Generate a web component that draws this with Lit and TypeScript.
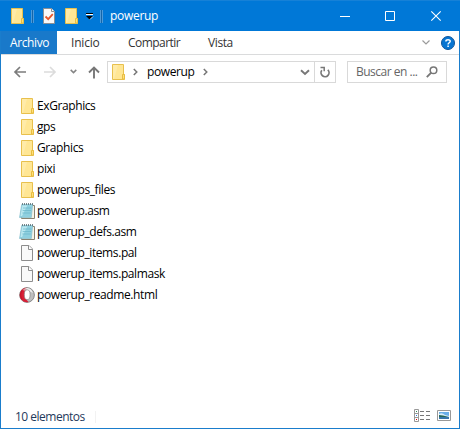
import { LitElement, html, css, svg } from "lit";
import { customElement, property } from "lit/decorators.js";

const folder = svg`
  <path d="M1.5 .5h11v10.2h1v4.8h-12z" fill="#ffe694" stroke="#e8c04d"/>
  <path d="M2 1h5L3 15H2z" fill="#ffeba8"/>
  <path d="M11.5 15v-4.5h2V15z" fill="#ffe07a" stroke="#e8bd42"/>`;

const icons: Record<string, [number, number, unknown]> = {
  folder: [14, 16, folder],
  check: [12, 16, svg`<path d="M.5 .5h8l3 3v12H.5z" fill="#f8f8f8" stroke="#8b8f94"/>
    <path d="M8.5 .5v3h3" fill="#fff" stroke="#8b8f94"/>
    <path d="M2.5 8.5l2.7 2.7 4.6-5" fill="none" stroke="#e8562a" stroke-width="1.8"/>`],
  menu: [7, 6, svg`<path d="M0 .5h7" stroke="#000"/><path d="M0 1.500h7" stroke="#fff"/><path d="M0 3h7L3.500 6.500z" fill="#000"/><path d="M4 6.500L7 3.500" stroke="#fff" stroke-width=".7"/>`],
  minimize: [10, 10, svg`<path d="M0 5.500h10" stroke="#fff"/>`],
  maximize: [10, 10, svg`<path d="M.5 .5h9v9h-9z" fill="none" stroke="#fff"/>`],
  close: [10, 10, svg`<path d="M.3 .3l9.400 9.400M9.700 .3L.3 9.700" stroke="#fff" stroke-width="1.1"/>`],
  expand: [8, 5, svg`<path d="M.5 .5L4 4 7.500 .5" fill="none" stroke="#9b9b9b" stroke-width="1.2"/>`],
  help: [14, 14, svg`<circle cx="7" cy="7" r="6.500" fill="#0876d2" stroke="#0f559b"/>
    <path d="M4.900 5.400C4.900 3.200 9.200 3.200 9.200 5.300 9.200 6.800 7.100 6.700 7.100 8.500M7.100 9.600v1.500" fill="none" stroke="#fff" stroke-width="1.500"/>`],
  back: [12, 12, svg`<path d="M12 6H1.500M6 1L1 6l5 5" fill="none" stroke="#7c7c7c" stroke-width="1.700"/>`],
  forward: [12, 12, svg`<path d="M0 6h10.500M6 1l5 5-5 5" fill="none" stroke="#dcdcdc" stroke-width="1.700"/>`],
  recent: [7, 5, svg`<path d="M.7 .9L3.500 3.600 6.300 .9" fill="none" stroke="#858585" stroke-width="1.500"/>`],
  up: [12, 13, svg`<path d="M6 12.500V1.500M1 6.500l5-5 5 5" fill="none" stroke="#777" stroke-width="1.900"/>`],
  crumb: [5, 8, svg`<path d="M.8 .9L3.800 4 .8 7.100" fill="none" stroke="#757575" stroke-width="1.500"/>`],
  drop: [10, 7, svg`<path d="M1 1.200L5 5 9 1.200" fill="none" stroke="#777" stroke-width="1.900"/>`],
  refresh: [10, 12, svg`<path d="M7.800 3.800A4 4 0 1 1 1.800 4.300" fill="none" stroke="#777" stroke-width="1.700"/><path d="M.5 1.500H4.200V5.200" fill="none" stroke="#777" stroke-width="1.500"/>`],
  search: [12, 12, svg`<circle cx="7.500" cy="4.300" r="3.300" fill="none" stroke="#777" stroke-width="1.500"/><path d="M5.200 6.700L.8 11.100" stroke="#777" stroke-width="1.900"/>`],
  asm: [16, 16, svg`<path d="M4 2.500h11.500v13H2.500z" fill="#f6f3e6" stroke="#8a8370"/>
    <path d="M2.700 1.500H13.700L12.300 14.500H.5z" fill="#8fd0df" stroke="#7fb9c8" stroke-width=".6"/>
    <path d="M3.300 2.500h5L3 13H1.500z" fill="#bce8f0"/>
    <path d="M4 5h8.500M3.700 7.500H12M3.300 10h8.400" stroke="#69b4c8" stroke-width=".7"/>
    <path d="M3 1h12" stroke="#4d6469" stroke-width="1.400" stroke-dasharray="1 1"/>`],
  file: [12, 16, svg`<path d="M.5 .5h7.500l3.500 3.500v11.500H.5z" fill="#f9f9f9" stroke="#8d8d8d"/><path d="M7.500 .5V4.500h4" fill="#fff" stroke="#8d8d8d"/>`],
  opera: [16, 16, svg`<circle cx="8" cy="8" r="7.400" fill="#bebebe" stroke="#777" stroke-width=".8"/>
    <path d="M8 .8A7.200 7.200 0 0 0 2.500 12.700Q5.500 16 9.500 15L6 11V5z" fill="#d81f36"/>
    <path d="M3.500 3Q5.500 .8 9 1L6.500 4z" fill="#d8a0a5"/>
    <path d="M3 3.500Q.3 8 3 12.500" fill="none" stroke="#c0152c" stroke-width="1.200"/>
    <path d="M6 1.500Q9 0 12 2.500L14 6 10 4z" fill="#efefef"/>
    <ellipse cx="8.200" cy="7.700" rx="2.900" ry="4.900" fill="#fff" stroke="#858585" stroke-width=".7"/>`],
  details: [16, 13, svg`<path d="M.5 .5h4v12h-4zM.5 4.500h4M.5 8.500h4" fill="#fff" stroke="#999"/>
    <path d="M2 2.500h1" stroke="#2b8a57"/><path d="M2 6.500h1" stroke="#2378dc"/><path d="M2 10.500h1" stroke="#d00"/>
    <path d="M6 2.500h4m2 0h4M6 6.500h4m2 0h4M6 10.500h4m2 0h4" stroke="#777"/>`],
  preview: [14, 11, svg`<path d="M.5 .5h13v10H.5z" fill="#fff" stroke="#999"/><path d="M2 2h10v7H2z" fill="#69aee8"/><path d="M2 4q3-2 6 1l4 1v1H2z" fill="#d8edf7"/><path d="M2 5l4 .5 6 1.500H2z" fill="#276755"/><path d="M2 7h10v2H2z" fill="#3876aa"/>`],
};

@customElement("ui-icon")
class UiIcon extends LitElement {
  @property() name = "folder";
  static styles = css`:host{display:block;flex:none}svg{display:block;overflow:visible}`;
  render() {
    const [w, h, art] = icons[this.name];
    return html`<svg width=${w} height=${h} viewBox="0 0 ${w} ${h}">${art}</svg>`;
  }
}

const files = [
  ["folder", "ExGraphics"], ["folder", "gps"], ["folder", "Graphics"], ["folder", "pixi"],
  ["folder", "powerups_files"], ["asm", "powerup.asm"], ["asm", "powerup_defs.asm"],
  ["file", "powerup_items.pal"], ["file", "powerup_items.palmask"], ["opera", "powerup_readme.html"],
];

@customElement("app-root")
class AppRoot extends LitElement {
  static styles = css`
    :host{display:block;height:429px;font:12px/16px "Open Sans","Noto Sans",sans-serif;letter-spacing:-.4px;color:#000}
    *{box-sizing:border-box}
    .window{width:460px;height:429px;display:flex;flex-direction:column;background:#fff;border:1px solid #1a7dcc;border-top:0}
    .title{height:31px;margin:0 -1px;flex:none;display:flex;align-items:center;background:#0078d7;border-top:1px solid #1681d7;color:#fff;padding-left:10px;letter-spacing:-.3px}
    .sep{width:3px;height:13px;border:1px solid #4c9ada;border-width:0 1px;background:#1565a8;flex:none}
    .title .s1{margin:0 9px 0 7px}.title .f2{margin:0 8px 0 9px}.title .s2{margin:0 7px 0 7px}
    .controls{margin-left:auto;display:flex;gap:36px;padding-right:19px}
    .controls ui-icon:first-child{margin-right:-1px}
    .tabs{height:24px;flex:none;display:flex;border-bottom:1px solid #dadbdc;color:#333;line-height:23px}
    .tab{white-space:nowrap}
    .archive{width:56px;padding-left:9px;background:#1979ca;color:#fff}
    .home{padding-left:14px;width:71px;letter-spacing:-.2px}.share{width:80px;letter-spacing:-.55px}
    .tools{margin-left:auto;display:flex;align-items:center;gap:11px;padding-right:4px}
    .nav{height:34px;flex:none;display:flex;align-items:center;padding-left:13px}
    .nav .fw{margin-left:18px}.nav .rc{margin-left:14px;margin-bottom:2px}.nav .upi{margin:0 7px 0 11px}
    .address{width:229px;height:22px;border:1px solid #d9d9d9;display:flex;align-items:center;padding-left:3px}
    .address .c1{margin:0 9px 0 8px}.address .c2{margin-left:8px}.address .dr{margin:0 4px 0 auto}
    .crumb{width:48px;white-space:nowrap}
    .reload{width:21px;height:20px;border-left:1px solid #d9d9d9;display:grid;place-items:center}
    .search{width:100px;height:22px;border:1px solid #d9d9d9;margin-left:11px;padding:0 8px;display:flex;align-items:center;justify-content:space-between;color:#666;white-space:nowrap}
    .list{flex:1;padding:6px 0 0 18px}
    .search span{letter-spacing:-.5px}
    .row{height:21px;display:flex;align-items:center}
    .pic{width:16px;display:grid;place-items:center;margin-right:2px}
    .status{height:23px;flex:none;display:flex;align-items:center;padding:0 8px 0 14px;color:#1e395b}
    .count{width:81px;border-right:1px solid #f2f2f2;white-space:nowrap;height:12px;line-height:11px;letter-spacing:-.5px}
    .views{margin-left:auto;display:flex;align-items:center;gap:7px}
    .views ui-icon:first-child{margin-top:-2px}.views ui-icon:last-child{margin-top:-2px}
  `;
  render() {
    return html`<div class="window">
      <div class="title">
        <ui-icon></ui-icon><i class="sep s1"></i><ui-icon name="check"></ui-icon><ui-icon class="f2"></ui-icon>
        <ui-icon name="menu"></ui-icon><i class="sep s2"></i><span>powerup</span>
        <div class="controls"><ui-icon name="minimize"></ui-icon><ui-icon name="maximize"></ui-icon><ui-icon name="close"></ui-icon></div>
      </div>
      <div class="tabs">
        <span class="tab archive">Archivo</span><span class="tab home">Inicio</span><span class="tab share">Compartir</span><span class="tab">Vista</span>
        <div class="tools"><ui-icon name="expand"></ui-icon><ui-icon name="help"></ui-icon></div>
      </div>
      <div class="nav">
        <ui-icon name="back"></ui-icon><ui-icon class="fw" name="forward"></ui-icon><ui-icon class="rc" name="recent"></ui-icon><ui-icon class="upi" name="up"></ui-icon>
        <div class="address"><ui-icon></ui-icon><ui-icon class="c1" name="crumb"></ui-icon><span class="crumb">powerup</span><ui-icon class="c2" name="crumb"></ui-icon><ui-icon class="dr" name="drop"></ui-icon><div class="reload"><ui-icon name="refresh"></ui-icon></div></div>
        <div class="search"><span>Buscar en ...</span><ui-icon name="search"></ui-icon></div>
      </div>
      <div class="list">${files.map(([icon, name]) => html`<div class="row"><div class="pic"><ui-icon name=${icon}></ui-icon></div><span>${name}</span></div>`)}</div>
      <div class="status"><span class="count">10 elementos</span><div class="views"><ui-icon name="details"></ui-icon><ui-icon name="preview"></ui-icon></div></div>
    </div>`;
  }
}
